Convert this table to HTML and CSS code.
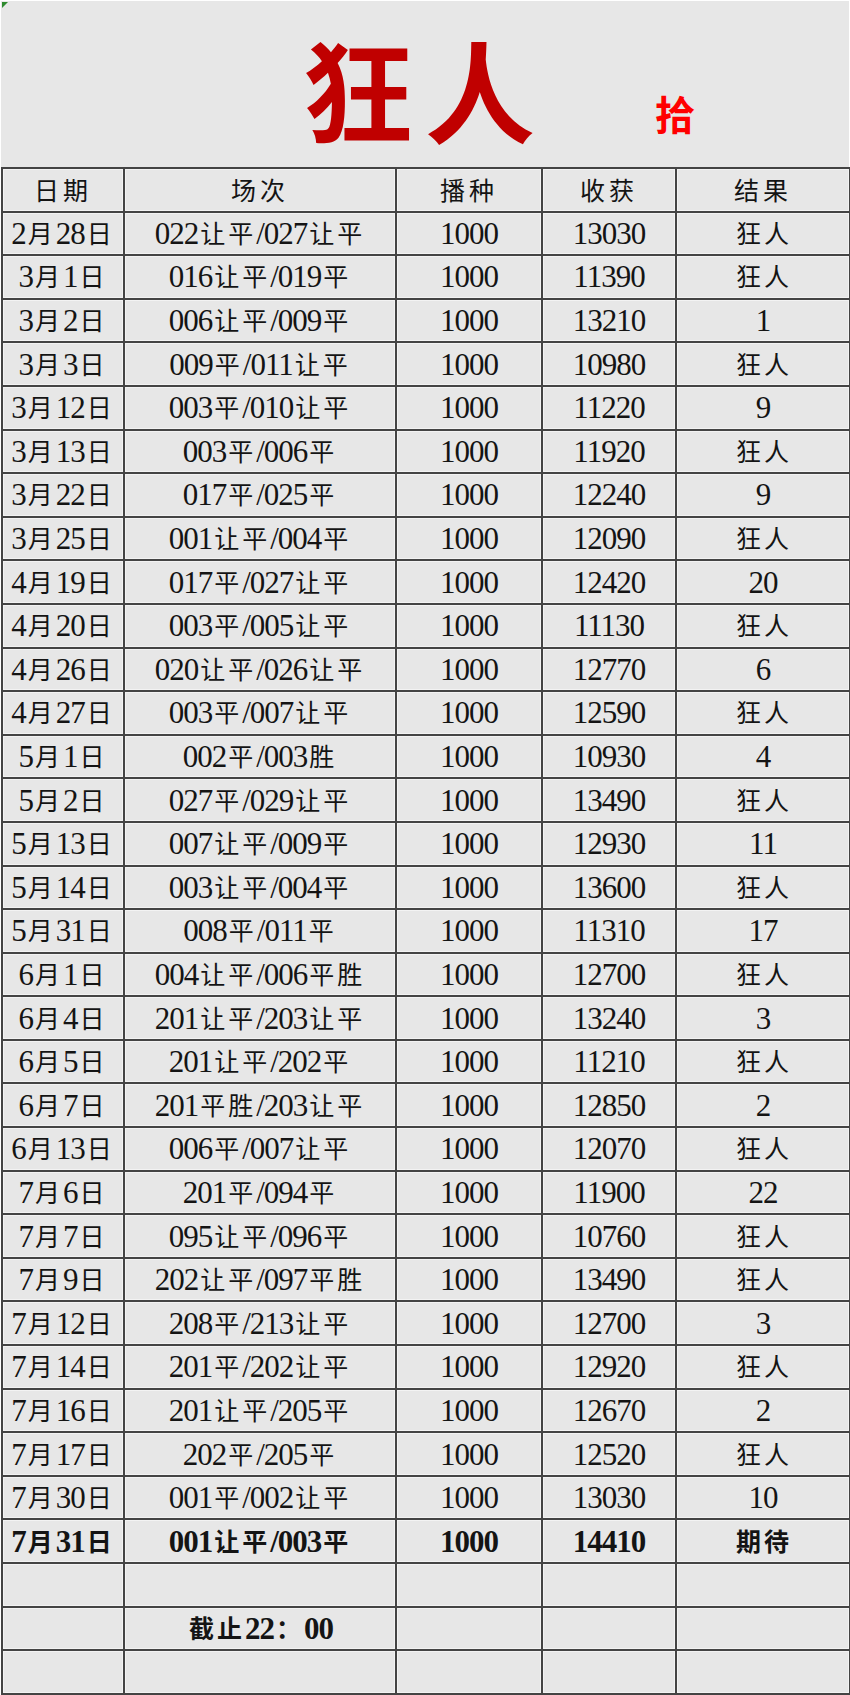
FILE: index.html
```html
<!DOCTYPE html>
<html lang="zh-CN">
<head>
<meta charset="utf-8">
<title>狂人 拾</title>
<link rel="stylesheet" href="styles.css">
</head>
<body>
<div class="sheet">
  <span class="marker"></span>
  <header class="title">
    <h1 class="main">狂人</h1>
    <span class="sub">拾</span>
  </header>
  <table class="grid">
    <colgroup>
      <col class="w-date"><col class="w-match"><col class="w-seed"><col class="w-gain"><col class="w-result">
    </colgroup>
    <thead>
      <tr><th>日期</th><th>场次</th><th>播种</th><th>收获</th><th>结果</th></tr>
    </thead>
    <tbody>
      <tr><td>2<i>月</i>28<i>日</i></td><td>022<i>让平</i>/027<i>让平</i></td><td>1000</td><td>13030</td><td><i>狂人</i></td></tr>
      <tr><td>3<i>月</i>1<i>日</i></td><td>016<i>让平</i>/019<i>平</i></td><td>1000</td><td>11390</td><td><i>狂人</i></td></tr>
      <tr><td>3<i>月</i>2<i>日</i></td><td>006<i>让平</i>/009<i>平</i></td><td>1000</td><td>13210</td><td>1</td></tr>
      <tr><td>3<i>月</i>3<i>日</i></td><td>009<i>平</i>/011<i>让平</i></td><td>1000</td><td>10980</td><td><i>狂人</i></td></tr>
      <tr><td>3<i>月</i>12<i>日</i></td><td>003<i>平</i>/010<i>让平</i></td><td>1000</td><td>11220</td><td>9</td></tr>
      <tr><td>3<i>月</i>13<i>日</i></td><td>003<i>平</i>/006<i>平</i></td><td>1000</td><td>11920</td><td><i>狂人</i></td></tr>
      <tr><td>3<i>月</i>22<i>日</i></td><td>017<i>平</i>/025<i>平</i></td><td>1000</td><td>12240</td><td>9</td></tr>
      <tr><td>3<i>月</i>25<i>日</i></td><td>001<i>让平</i>/004<i>平</i></td><td>1000</td><td>12090</td><td><i>狂人</i></td></tr>
      <tr><td>4<i>月</i>19<i>日</i></td><td>017<i>平</i>/027<i>让平</i></td><td>1000</td><td>12420</td><td>20</td></tr>
      <tr><td>4<i>月</i>20<i>日</i></td><td>003<i>平</i>/005<i>让平</i></td><td>1000</td><td>11130</td><td><i>狂人</i></td></tr>
      <tr><td>4<i>月</i>26<i>日</i></td><td>020<i>让平</i>/026<i>让平</i></td><td>1000</td><td>12770</td><td>6</td></tr>
      <tr><td>4<i>月</i>27<i>日</i></td><td>003<i>平</i>/007<i>让平</i></td><td>1000</td><td>12590</td><td><i>狂人</i></td></tr>
      <tr><td>5<i>月</i>1<i>日</i></td><td>002<i>平</i>/003<i>胜</i></td><td>1000</td><td>10930</td><td>4</td></tr>
      <tr><td>5<i>月</i>2<i>日</i></td><td>027<i>平</i>/029<i>让平</i></td><td>1000</td><td>13490</td><td><i>狂人</i></td></tr>
      <tr><td>5<i>月</i>13<i>日</i></td><td>007<i>让平</i>/009<i>平</i></td><td>1000</td><td>12930</td><td>11</td></tr>
      <tr><td>5<i>月</i>14<i>日</i></td><td>003<i>让平</i>/004<i>平</i></td><td>1000</td><td>13600</td><td><i>狂人</i></td></tr>
      <tr><td>5<i>月</i>31<i>日</i></td><td>008<i>平</i>/011<i>平</i></td><td>1000</td><td>11310</td><td>17</td></tr>
      <tr><td>6<i>月</i>1<i>日</i></td><td>004<i>让平</i>/006<i>平胜</i></td><td>1000</td><td>12700</td><td><i>狂人</i></td></tr>
      <tr><td>6<i>月</i>4<i>日</i></td><td>201<i>让平</i>/203<i>让平</i></td><td>1000</td><td>13240</td><td>3</td></tr>
      <tr><td>6<i>月</i>5<i>日</i></td><td>201<i>让平</i>/202<i>平</i></td><td>1000</td><td>11210</td><td><i>狂人</i></td></tr>
      <tr><td>6<i>月</i>7<i>日</i></td><td>201<i>平胜</i>/203<i>让平</i></td><td>1000</td><td>12850</td><td>2</td></tr>
      <tr><td>6<i>月</i>13<i>日</i></td><td>006<i>平</i>/007<i>让平</i></td><td>1000</td><td>12070</td><td><i>狂人</i></td></tr>
      <tr><td>7<i>月</i>6<i>日</i></td><td>201<i>平</i>/094<i>平</i></td><td>1000</td><td>11900</td><td>22</td></tr>
      <tr><td>7<i>月</i>7<i>日</i></td><td>095<i>让平</i>/096<i>平</i></td><td>1000</td><td>10760</td><td><i>狂人</i></td></tr>
      <tr><td>7<i>月</i>9<i>日</i></td><td>202<i>让平</i>/097<i>平胜</i></td><td>1000</td><td>13490</td><td><i>狂人</i></td></tr>
      <tr><td>7<i>月</i>12<i>日</i></td><td>208<i>平</i>/213<i>让平</i></td><td>1000</td><td>12700</td><td>3</td></tr>
      <tr><td>7<i>月</i>14<i>日</i></td><td>201<i>平</i>/202<i>让平</i></td><td>1000</td><td>12920</td><td><i>狂人</i></td></tr>
      <tr><td>7<i>月</i>16<i>日</i></td><td>201<i>让平</i>/205<i>平</i></td><td>1000</td><td>12670</td><td>2</td></tr>
      <tr><td>7<i>月</i>17<i>日</i></td><td>202<i>平</i>/205<i>平</i></td><td>1000</td><td>12520</td><td><i>狂人</i></td></tr>
      <tr><td>7<i>月</i>30<i>日</i></td><td>001<i>平</i>/002<i>让平</i></td><td>1000</td><td>13030</td><td>10</td></tr>
      <tr class="bold"><td>7<i>月</i>31<i>日</i></td><td>001<i>让平</i>/003<i>平</i></td><td>1000</td><td>14410</td><td><i>期待</i></td></tr>
      <tr><td></td><td></td><td></td><td></td><td></td></tr>
      <tr class="bold"><td></td><td><i>截止</i>22<i>：</i>00</td><td></td><td></td><td></td></tr>
      <tr><td></td><td></td><td></td><td></td><td></td></tr>
    </tbody>
  </table>
</div>
</body>
</html>
```

FILE: styles.css
```css
html, body {
  margin: 0;
  padding: 0;
  background: #ffffff;
}

.sheet {
  position: relative;
  width: 848px;
  margin: 1px 1px 0 1px;
  background: #e7e7e7;
}

.marker {
  position: absolute;
  left: 1px;
  top: 1px;
  width: 0;
  height: 0;
  border-top: 6px solid #2e8b2e;
  border-right: 6px solid transparent;
}

.title {
  height: 166px;
  display: flex;
  align-items: flex-start;
  padding-left: 302px;
  box-sizing: border-box;
}

.main {
  margin: 0;
  margin-top: 31px;
  font-family: "Noto Sans CJK SC", sans-serif;
  font-weight: 700;
  font-size: 110px;
  line-height: 1;
  letter-spacing: 12px;
  color: #c00000;
}

.sub {
  margin-left: 108px;
  margin-top: 92px;
  font-family: "Noto Sans CJK SC", sans-serif;
  font-weight: 700;
  font-size: 40px;
  line-height: 1;
  color: #ff0000;
}

.grid {
  width: 848px;
  border-collapse: collapse;
  table-layout: fixed;
  font-family: "Liberation Serif", "Noto Sans CJK SC", serif;
  font-size: 31px;
  letter-spacing: -1px;
  color: #141414;
}

.w-date { width: 122px; }
.w-match { width: 272px; }
.w-seed { width: 146px; }
.w-gain { width: 134px; }
.w-result { width: 174px; }

.grid tr {
  height: 43.6px;
}

.grid th,
.grid td {
  border: 2px solid #444444;
  padding: 0;
  text-align: center;
  vertical-align: middle;
  line-height: 1;
  white-space: nowrap;
  box-shadow: inset 1px 1px 0 #f3f3f3, inset -1px -1px 0 #f3f3f3;
}

.grid th {
  font-family: "Noto Sans CJK SC", sans-serif;
  font-weight: 400;
  font-size: 25px;
  letter-spacing: 4px;
}

.grid i {
  font-style: normal;
  font-family: "Noto Sans CJK SC", sans-serif;
  font-size: 25px;
  letter-spacing: 3px;
  padding-left: 2px;
  vertical-align: 1px;
}

.bold td {
  font-weight: 700;
}
```
